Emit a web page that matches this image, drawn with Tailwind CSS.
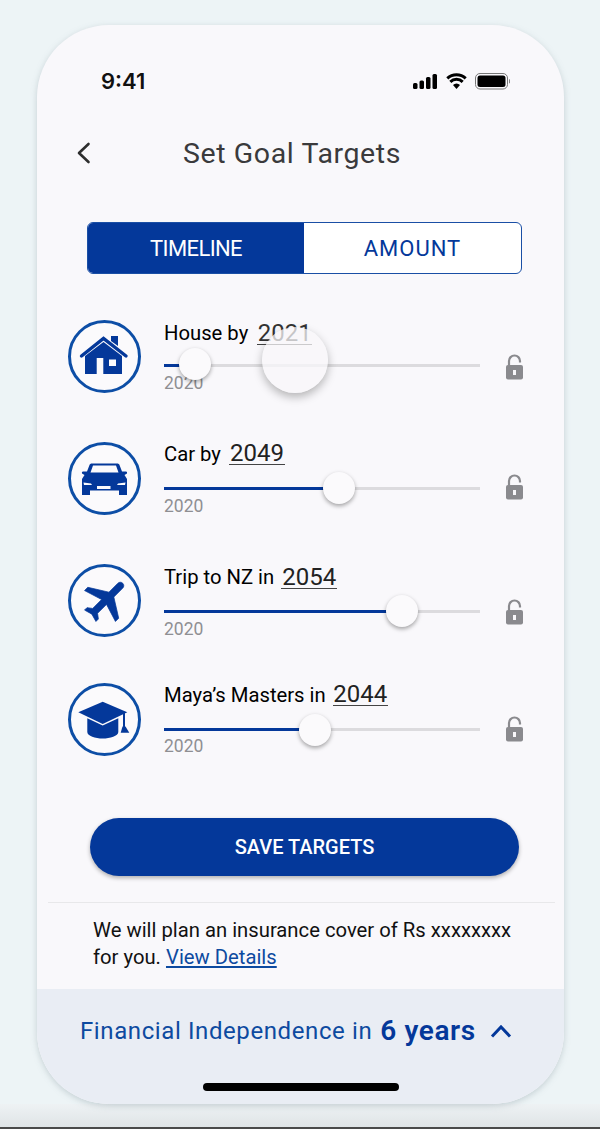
<!DOCTYPE html>
<html lang="en">
<head>
    <meta charset="UTF-8">
    <meta name="viewport" content="width=device-width, initial-scale=1.0">
    <title>Set Goal Targets</title>
    <script src="https://cdn.jsdelivr.net/npm/@tailwindcss/browser@4"></script>
</head>
<body class="bg-[#edf4f6] font-['Roboto',sans-serif] h-[1129px] w-[600px] overflow-hidden">
    <div class="pt-[25px] pl-[37px]">
        <!-- phone -->
        <div class="relative w-[527px] h-[1079px] bg-[#f9f8fb] rounded-[72px] overflow-hidden shadow-[0_2px_6px_rgba(120,140,150,0.35)]">
            <!-- status bar -->
            <div class="flex items-center justify-between h-[24px] mt-[44px] pl-[64px] pr-[54px]">
                <span class="font-['Inter',sans-serif] font-semibold text-[22px] leading-none text-[#111]">9:41</span>
                <svg width="97" height="17" viewBox="0 0 97 17" fill="#000">
                    <rect x="0" y="10" width="4.5" height="6" rx="1.5"/>
                    <rect x="6.5" y="7.5" width="4.5" height="8.5" rx="1.5"/>
                    <rect x="13" y="4" width="4.5" height="12" rx="1.5"/>
                    <rect x="19.5" y="1" width="4.5" height="15" rx="1.5"/>
                    <path d="M34.300 5.300a13.500 13.500 0 0 1 18.400 0M37.300 8.800a9 9 0 0 1 12.400 0" stroke="#000" stroke-width="3" fill="none"/>
                    <path d="M40 12a4.800 4.800 0 0 1 7 0l-3.500 4z"/>
                    <rect x="62.500" y="0.500" width="32" height="15.500" rx="4.500" fill="none" stroke="#777" stroke-width="1"/>
                    <rect x="64.500" y="2.500" width="28" height="11.500" rx="2.500"/>
                    <path d="M96 6v4.500a2.500 2.500 0 0 0 0-4.500z" fill="#888"/>
                </svg>
            </div>

            <!-- header -->
            <div class="relative flex items-center justify-center h-[40px] mt-[40px]">
                <svg class="absolute left-[39px] top-[9px]" width="16" height="22" viewBox="0 0 16 22" fill="none" stroke="#2e2e2e" stroke-width="2.600" stroke-linecap="round" stroke-linejoin="round"><path d="M12.500 2 3 11l9.500 9"/></svg>
                <h1 class="text-[28.5px] leading-none tracking-[0.6px] text-[#3a3a3c] ml-[-17px] mt-[2px]">Set Goal Targets</h1>
            </div>

            <!-- tabs -->
            <div class="flex h-[52px] w-[435px] ml-[50px] mt-[49px] rounded-[6px] border border-[#1a4fa5] bg-white overflow-hidden">
                <div class="flex items-center justify-center w-[216px] bg-[#04389a] text-white text-[22px] tracking-[-0.6px]">TIMELINE</div>
                <div class="flex items-center justify-center flex-1 text-[#04389a] text-[22px] tracking-[1px]">AMOUNT</div>
            </div>

            <!-- goal rows -->
            <div class="flex pl-[31px] h-[73px] mt-[46px]">
                <svg class="shrink-0" width="73" height="73" viewBox="0 0 73 73">
                    <circle cx="36.500" cy="36.500" r="35" fill="#fbfafc" stroke="#0d4ea6" stroke-width="3"/>
                    <path fill="#04389a" fill-rule="evenodd" d="M17 54V36L35.500 22 54 36V54H41V39.500H48V46H41V54H35.300V38H28.700V54z"/>
                    <path fill="#04389a" d="M43 16h7v10l-7-5z"/>
                    <path fill="none" stroke="#04389a" stroke-width="3.400" stroke-linecap="round" d="M13.500 36 35.500 18.500 58 36"/>
                </svg>
                <div class="relative w-[316px] ml-[23px]">
                    <div class="flex items-end h-[28px] mt-[-1px]">
                        <span class="text-[20.25px] leading-[27px] text-black">House by</span>
                        <span class="w-[55px] ml-[9px] mb-[2px] border-b border-[#444] text-[24px] leading-[25px] text-center text-[#333] h-[24px]">2021</span>
                    </div>
                    <div class="h-[3px] bg-[#dcdbde] mt-[17px] relative">
                        <div class="h-[3px] w-[31px] bg-[#04389a]"></div>
                        <div class="absolute left-[15px] top-[-16px] w-[32px] h-[32px] rounded-full bg-[#fbfafc] shadow-[0_2px_4px_rgba(0,0,0,0.35)]"></div>
                    </div>
                    <p class="text-[17.5px] leading-[20px] text-[#8f8f93] mt-[6px]">2020</p>
                    <div class="absolute left-[98px] top-[7px] w-[66px] h-[66px] rounded-full bg-[#f8f7fa]/75 shadow-[0_4px_10px_rgba(0,0,0,0.28)]"></div>
                </div>
                <svg class="shrink-0 ml-[25px] mt-[34px]" width="19" height="26" viewBox="0 0 19 26">
                    <path d="M4 12V7a5.500 5.500 0 0 1 11 0v1.500" fill="none" stroke="#8a8a8e" stroke-width="2.200"/>
                    <rect x="1" y="11" width="17" height="14.500" rx="2" fill="#8a8a8e"/>
                    <rect x="8" y="16" width="3" height="5" fill="#f8f7fa"/>
                </svg>
            </div>

            <div class="flex pl-[31px] h-[73px] mt-[49px]">
                <svg class="shrink-0" width="73" height="73" viewBox="0 0 73 73">
                    <circle cx="36.500" cy="36.500" r="35" fill="#fbfafc" stroke="#0d4ea6" stroke-width="3"/>
                    <path fill="#04389a" fill-rule="evenodd" d="M24 21.500H49C50.500 21.500 51 22 51.500 23L54 29.500H58C59 29.500 59.300 30.500 59 31.500L56.500 33 59 37V53H51V48.500H22V53H14V37L16.500 33 14 31.500C13.700 30.500 14 29.500 15 29.500H19L21.500 23C22 22 22.500 21.500 24 21.500ZM25 23.500 22.500 30.500H50.500L48 23.500ZM15.500 40.500 16 43H24L23 41.500ZM57.500 40.500 50 41.500 49 43H57ZM29 44V47H42.500V44Z"/>
                </svg>
                <div class="w-[316px] ml-[23px]">
                    <div class="flex items-end h-[28px] mt-[-2px]">
                        <span class="text-[20.25px] leading-[27px] text-black">Car by</span>
                        <span class="w-[56px] ml-[8px] mb-[3px] border-b border-[#444] text-[24px] leading-[25px] text-center text-[#222] h-[24px]">2049</span>
                    </div>
                    <div class="h-[3px] bg-[#dcdbde] mt-[19px] relative">
                        <div class="h-[3px] w-[175px] bg-[#04389a]"></div>
                        <div class="absolute left-[159px] top-[-15px] w-[32px] h-[32px] rounded-full bg-[#fbfafc] shadow-[0_2px_4px_rgba(0,0,0,0.35)]"></div>
                    </div>
                    <p class="text-[17.5px] leading-[20px] text-[#8f8f93] mt-[6px]">2020</p>
                </div>
                <svg class="shrink-0 ml-[25px] mt-[32px]" width="19" height="26" viewBox="0 0 19 26">
                    <path d="M4 12V7a5.500 5.500 0 0 1 11 0v1.500" fill="none" stroke="#8a8a8e" stroke-width="2.200"/>
                    <rect x="1" y="11" width="17" height="14.500" rx="2" fill="#8a8a8e"/>
                    <rect x="8" y="16" width="3" height="5" fill="#f8f7fa"/>
                </svg>
            </div>

            <div class="flex pl-[31px] h-[73px] mt-[49px]">
                <svg class="shrink-0" width="73" height="73" viewBox="0 0 73 73">
                    <circle cx="36.500" cy="36.500" r="35" fill="#fbfafc" stroke="#0d4ea6" stroke-width="3"/>
                    <path fill="#04389a" stroke="#04389a" stroke-width="0.300" transform="translate(38.500 35.500) rotate(45) scale(2.300) translate(-11.500 -12)" d="M21 16v-2l-8-5V3.500c0-.83-.67-1.500-1.500-1.500S10 2.670 10 3.500V9l-8 5v2l8-2.500V19l-2 1.500V22l3.500-1 3.500 1v-1.500L13 19v-5.500l8 2.500z"/>
                </svg>
                <div class="w-[316px] ml-[23px]">
                    <div class="flex items-end h-[28px] mt-[-1px]">
                        <span class="text-[20.25px] leading-[27px] text-black">Trip to NZ in</span>
                        <span class="w-[56px] ml-[7px] mb-[2px] border-b border-[#444] text-[24px] leading-[25px] text-center text-[#222] h-[24px]">2054</span>
                    </div>
                    <div class="h-[3px] bg-[#dcdbde] mt-[19px] relative">
                        <div class="h-[3px] w-[238px] bg-[#04389a]"></div>
                        <div class="absolute left-[222px] top-[-15px] w-[32px] h-[32px] rounded-full bg-[#fbfafc] shadow-[0_2px_4px_rgba(0,0,0,0.35)]"></div>
                    </div>
                    <p class="text-[17.5px] leading-[20px] text-[#8f8f93] mt-[6px]">2020</p>
                </div>
                <svg class="shrink-0 ml-[25px] mt-[35px]" width="19" height="26" viewBox="0 0 19 26">
                    <path d="M4 12V7a5.500 5.500 0 0 1 11 0v1.500" fill="none" stroke="#8a8a8e" stroke-width="2.200"/>
                    <rect x="1" y="11" width="17" height="14.500" rx="2" fill="#8a8a8e"/>
                    <rect x="8" y="16" width="3" height="5" fill="#f8f7fa"/>
                </svg>
            </div>

            <div class="flex pl-[31px] h-[73px] mt-[46px]">
                <svg class="shrink-0" width="73" height="73" viewBox="0 0 73 73">
                    <circle cx="36.500" cy="36.500" r="35" fill="#fbfafc" stroke="#0d4ea6" stroke-width="3"/>
                    <path fill="#04389a" d="M10.300 29.300 34.700 18.700 59.300 29.300 34.700 41z"/>
                    <path fill="#04389a" d="M19.300 35.300 34.700 42.500 50.300 35.300V49C50.300 53 42 55.500 34.700 55.500S19.300 53 19.300 49z"/>
                    <path fill="none" stroke="#04389a" stroke-width="2" d="M56 30V44"/>
                    <path fill="#04389a" d="M54.500 43.500H57.500L61.300 49.700H52.700z"/>
                </svg>
                <div class="w-[316px] ml-[23px]">
                    <div class="flex items-end h-[28px] mt-[-2px]">
                        <span class="text-[20.25px] leading-[27px] text-black">Maya’s Masters in</span>
                        <span class="w-[55px] ml-[7px] mb-[3px] border-b border-[#444] text-[24px] leading-[25px] text-center text-[#222] h-[24px]">2044</span>
                    </div>
                    <div class="h-[3px] bg-[#dcdbde] mt-[19px] relative">
                        <div class="h-[3px] w-[136px] bg-[#04389a]"></div>
                        <div class="absolute left-[135px] top-[-14px] w-[32px] h-[32px] rounded-full bg-[#fbfafc] shadow-[0_2px_4px_rgba(0,0,0,0.35)]"></div>
                    </div>
                    <p class="text-[17.5px] leading-[20px] text-[#8f8f93] mt-[5px]">2020</p>
                </div>
                <svg class="shrink-0 ml-[25px] mt-[33px]" width="19" height="26" viewBox="0 0 19 26">
                    <path d="M4 12V7a5.500 5.500 0 0 1 11 0v1.500" fill="none" stroke="#8a8a8e" stroke-width="2.200"/>
                    <rect x="1" y="11" width="17" height="14.500" rx="2" fill="#8a8a8e"/>
                    <rect x="8" y="16" width="3" height="5" fill="#f8f7fa"/>
                </svg>
            </div>

            <!-- save -->
            <button class="flex items-center justify-center w-[429px] h-[58px] ml-[53px] mt-[62px] rounded-full bg-[#04389a] text-white text-[20px] font-medium shadow-[0_2px_4px_rgba(0,0,0,0.3)]">SAVE TARGETS</button>
            <div class="w-[507px] h-px ml-[11px] mt-[26px] bg-[#e8e8ea]"></div>
            <div class="ml-[56px] mt-[14px] text-[20.25px] leading-[27px] text-[#111]">
                <p>We will plan an insurance cover of Rs xxxxxxxx</p>
                <p>for you. <a href="#" class="text-[#0d4aa0] underline">View Details</a></p>
            </div>

            <!-- bottom band -->
            <div class="relative h-[115px] mt-[18px] bg-[#e9edf4] pl-[43px] pt-[24px]">
                <div class="flex items-center h-[36px]">
                    <span class="text-[24px] tracking-[0.6px] text-[#0d4aa0]">Financial Independence in</span>
                    <span class="ml-[8px] text-[28px] font-semibold tracking-[0.6px] text-[#04389a]">6 years</span>
                    <svg class="ml-[14px]" width="22" height="14" viewBox="0 0 22 14" fill="none" stroke="#04389a" stroke-width="3"><path d="M2 12.500 11 3l9 9.500"/></svg>
                </div>
                <div class="absolute left-[166px] top-[94px] w-[196px] h-[8px] rounded-full bg-black"></div>
            </div>
        </div>
    </div>
    <!-- bottom edge -->
    <div class="h-[25px] bg-gradient-to-b from-[#eef2f4] to-[#dfe4e6] border-b-2 border-[#4a4a4a]"></div>
</body>
</html>
